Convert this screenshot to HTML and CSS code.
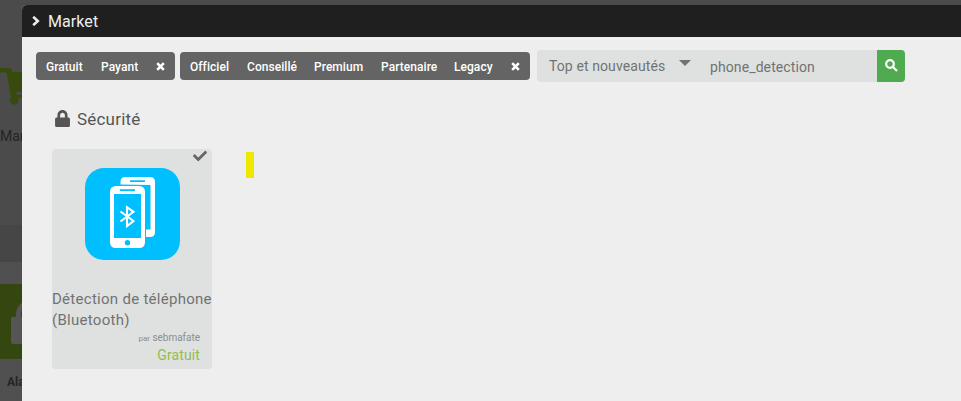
FILE: index.html
```html
<!DOCTYPE html>
<html lang="fr">
<head>
<meta charset="utf-8">
<title>Market</title>
<link rel="stylesheet" href="styles.css">
</head>
<body>
<div class="desktop">
  <div class="shortcut market">
    <svg class="cart" viewBox="0 0 40 39"><path d="M1 0h8q2 0 2.500 2l.5 2h28l-5 20H16l1 3h19v3H18a4.300 4.300 0 1 1-7-.5L6.500 4.500H1Q-1 4.500-1 2.200T1 0z"/></svg>
    <span>Market</span>
  </div>
  <div class="band"></div>
  <div class="shortcut alarm">
    <div class="tile"><svg viewBox="0 0 44 45"><path fill-rule="evenodd" d="M5 18V15a17 15 0 0 1 34 0v3h5v27H2q-2 0-2-2V20q0-2 2-2zM10 18h24v-3a12 11 0 0 0-24 0z"/></svg></div>
    <span>Alarme</span>
  </div>
</div>
<section class="modal">
  <header class="titlebar">
    <svg viewBox="0 0 8 10"><path d="M1.200 .8L5.800 5 1.200 9.200"/></svg>
    <h1>Market</h1>
  </header>
  <main class="content">
    <div class="toolbar">
      <div class="group cost">
        <span class="gratuit">Gratuit</span><span class="payant">Payant</span>
        <svg viewBox="0 0 9 9"><path d="M1.200 1.200l6.600 6.600M7.800 1.200L1.200 7.800"/></svg>
      </div>
      <div class="group kind">
        <span class="officiel">Officiel</span><span class="conseille">Conseillé</span><span class="premium">Premium</span><span class="partenaire">Partenaire</span><span class="legacy">Legacy</span>
        <svg viewBox="0 0 9 9"><path d="M1.200 1.200l6.600 6.600M7.800 1.200L1.200 7.800"/></svg>
      </div>
      <div class="search">
        <div class="sort"><span>Top et nouveautés</span><i class="caret"></i></div>
        <div class="query">phone_detection</div>
        <div class="go"><svg viewBox="0 0 13 13"><circle cx="5" cy="5" r="3.800"/><path d="M8 8l4 4"/></svg></div>
      </div>
    </div>
    <h2 class="category">
      <svg viewBox="0 0 448 512"><path d="M400 224h-24v-72C376 68.200 307.800 0 224 0S72 68.200 72 152v72H48c-26.500 0-48 21.500-48 48v192c0 26.500 21.500 48 48 48h352c26.500 0 48-21.500 48-48V272c0-26.500-21.500-48-48-48zm-104 0H152v-72c0-39.700 32.300-72 72-72s72 32.300 72 72v72z"/></svg>
      <span>Sécurité</span>
    </h2>
    <div class="results">
      <article class="card">
        <svg class="check" viewBox="0 0 512 512"><path d="M173.898 439.404l-166.400-166.400c-9.997-9.997-9.997-26.206 0-36.204l36.203-36.204c9.997-9.998 26.207-9.998 36.204 0L192 312.690 432.095 72.596c9.997-9.997 26.207-9.997 36.204 0l36.203 36.204c9.997 9.997 9.997 26.206 0 36.204l-294.400 294.401c-9.998 9.997-26.207 9.997-36.204-.001z"/></svg>
        <svg class="logo" viewBox="0 0 95 92">
          <rect width="95" height="92" rx="19" fill="#00bfff"/>
          <path fill="#fff" fill-rule="evenodd" d="M35.500 16.500v-2.500q0-5 5-5H65q5 0 5 5v50q0 5-5 5h-4v-7.500h4.500V17z"/>
          <rect x="24" y="17" width="37" height="64" rx="6.500" fill="#00bfff"/>
          <rect x="25" y="18" width="35" height="62" rx="5.500" fill="#fff"/>
          <path fill="#00bfff" d="M29 26h27v44H29zM35 21.300h15v1.800H35zM45 12.300h15v1.800H45z"/>
          <circle cx="42.500" cy="74.700" r="2.700" fill="#00bfff"/>
          <path fill="none" stroke="#fff" stroke-width="2.100" d="M35.500 43.500l13 9.500-6.500 5V39.200l6.500 4.600-13 9.700"/>
        </svg>
        <h3>Détection de téléphone<br>(Bluetooth)</h3>
        <p class="author"><small>par</small> <span>sebmafate</span></p>
        <p class="price">Gratuit</p>
      </article>
      <div class="mark"></div>
    </div>
  </main>
</section>
</body>
</html>
```
FILE: styles.css
```css
* { box-sizing: border-box; }
body { margin: 0; width: 961px; height: 401px; overflow: hidden; position: relative; background: #4f4f4f; font-family: Roboto, "Liberation Sans", sans-serif; }
h1, h2, h3, p { margin: 0; font-weight: 400; }
svg { display: block; flex: none; }
.desktop { width: 961px; height: 401px; background: #4b4b4b; display: flex; flex-direction: column; }
.shortcut span { color: #252525; font-size: 14px; line-height: 18px; display: block; }
.market { height: 225px; padding-top: 68px; }
.cart { width: 40px; height: 39px; fill: #384b0d; }
.market span { margin-top: 20px; }
.band { height: 37px; background: #464646; }
.alarm { flex: 1; background: #505050; padding-top: 22px; }
.tile { width: 75px; height: 75px; margin-left: -8px; border-radius: 7px; background: #344710; padding: 15px 0 0 19px; }
.tile svg { width: 44px; height: 45px; fill: #555; }
.alarm span { margin: 14px 0 0 7px; font-size: 12px; font-weight: 700; }
.modal { position: absolute; left: 22px; top: 5px; right: 0; bottom: 0; background: #eee; border-radius: 5px 0 0 0; overflow: hidden; }
.titlebar { height: 32px; background: #1f1f1f; display: flex; align-items: center; padding-left: 10px; color: #eee; }
.titlebar svg { width: 8px; height: 10px; fill: none; stroke: #eee; stroke-width: 2.6; }
.titlebar h1 { margin-left: 8px; padding-top: 2px; font-size: 16px; line-height: 20px; letter-spacing: .08px; }
.content { padding: 13px 14px; }
.toolbar { display: flex; height: 32px; align-items: center; }
.group { display: flex; align-items: center; height: 28px; background: #646464; border-radius: 4px; color: #fff; font-size: 12px; font-weight: 500; padding: 0 9px 0 10px; margin-right: 5px; }
.group svg { width: 9px; height: 9px; fill: none; stroke: #fff; stroke-width: 2.6; }
.group span { white-space: nowrap; padding-top: 2px; letter-spacing: .05px; }
.cost { width: 139px; }
.kind { width: 350px; margin-right: 7px; }
.gratuit { width: 55px; }
.payant { width: 55px; }
.officiel { width: 57px; }
.conseille { width: 67px; }
.premium { width: 67px; }
.partenaire { width: 73px; }
.legacy { width: 57px; }
.search { display: flex; width: 368px; height: 32px; border-radius: 4px; overflow: hidden; background: #dfe1e0; color: #707372; font-size: 14px; }
.sort { display: flex; width: 173px; padding-left: 12px; line-height: 32px; letter-spacing: .1px; }
.sort span { width: 130px; white-space: nowrap; }
.caret { width: 12px; height: 6px; margin-top: 10px; background: #707372; clip-path: polygon(0 0, 100% 0, 50% 100%); }
.query { flex: 1; line-height: 34px; letter-spacing: .1px; }
.go { width: 28px; background: #50aa50; padding: 9px 0 0 8px; }
.go svg { width: 13px; height: 13px; fill: none; stroke: #fff; stroke-width: 2.2; }
.category { display: flex; align-items: center; height: 24px; margin: 25px 0 0 19px; color: #555; font-size: 17px; }
.category svg { width: 15px; height: 17px; margin-top: -1px; fill: #555; }
.category span { margin-left: 7px; letter-spacing: .2px; }
.results { display: flex; margin: 18px 0 0 16px; }
.card { width: 160px; height: 220px; border-radius: 4px; background: #dfe1e0; color: #707372; display: flex; flex-direction: column; }
.check { width: 14px; height: 14px; fill: #666; margin-left: 141px; }
.logo { width: 95px; height: 92px; margin: 5px 0 0 33px; }
.card h3 { margin-top: 29px; font-size: 15px; line-height: 21px; white-space: nowrap; letter-spacing: .28px; }
.author { padding-right: 12px; text-align: right; font-size: 10px; line-height: 16px; color: #8c8e8d; margin-top: -1px; letter-spacing: -.02px; }
.author small { font-size: 8px; }
.price { padding-right: 12px; text-align: right; color: #94bd4b; font-size: 14px; line-height: 20px; margin-top: -2px; letter-spacing: .12px; }
.mark { width: 8px; height: 26px; margin: 3px 0 0 34px; background: #eee700; }
```
